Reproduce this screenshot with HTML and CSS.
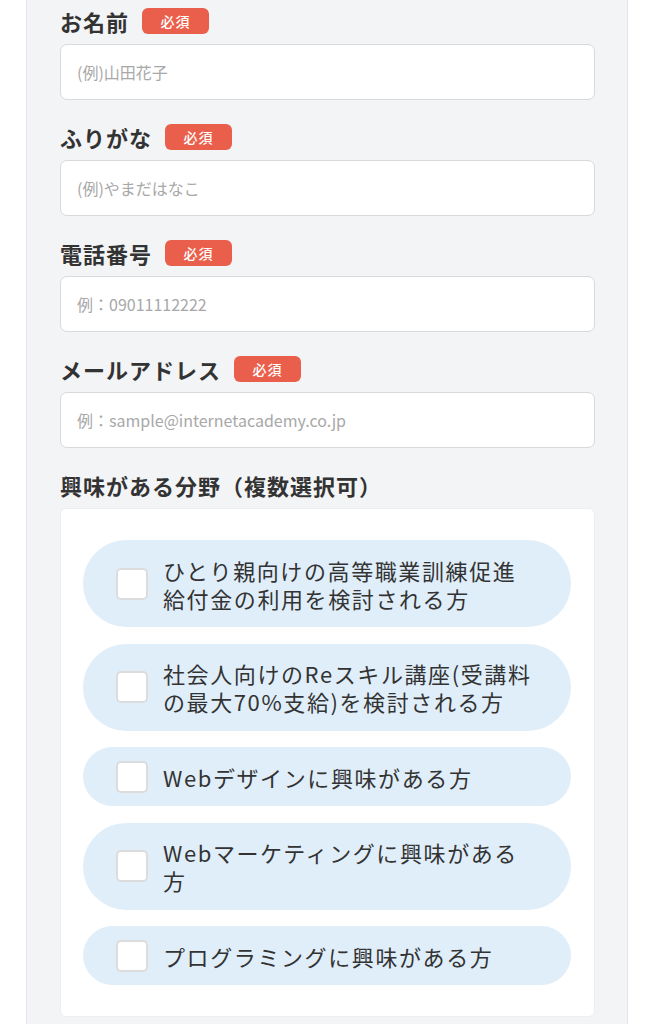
FILE: index.html
```html
<!DOCTYPE html>
<html lang="ja">
<head>
<meta charset="utf-8">
<title>お問い合わせフォーム</title>
<link rel="stylesheet" href="styles.css">
</head>
<body>
<div class="page">
  <form class="panel">
    <div class="field">
      <div class="label-row"><span class="label">お名前</span><span class="badge">必須</span></div>
      <input class="text-input" type="text" placeholder="(例)山田花子">
    </div>
    <div class="field">
      <div class="label-row"><span class="label">ふりがな</span><span class="badge">必須</span></div>
      <input class="text-input" type="text" placeholder="(例)やまだはなこ">
    </div>
    <div class="field">
      <div class="label-row"><span class="label">電話番号</span><span class="badge">必須</span></div>
      <input class="text-input" type="tel" placeholder="例：09011112222">
    </div>
    <div class="field">
      <div class="label-row"><span class="label">メールアドレス</span><span class="badge">必須</span></div>
      <input class="text-input" type="email" placeholder="例：sample@internetacademy.co.jp">
    </div>
    <div class="field">
      <div class="label-row"><span class="label">興味がある分野（複数選択可）</span></div>
      <div class="choices">
        <label class="choice"><input class="check" type="checkbox"><span class="choice-text">ひとり親向けの高等職業訓練促進給付金の利用を検討される方</span></label>
        <label class="choice"><input class="check" type="checkbox"><span class="choice-text">社会人向けのReスキル講座(受講料の最大70%支給)を検討される方</span></label>
        <label class="choice"><input class="check" type="checkbox"><span class="choice-text">Webデザインに興味がある方</span></label>
        <label class="choice"><input class="check" type="checkbox"><span class="choice-text">Webマーケティングに興味がある方</span></label>
        <label class="choice"><input class="check" type="checkbox"><span class="choice-text">プログラミングに興味がある方</span></label>
      </div>
    </div>
  </form>
</div>
</body>
</html>
```

FILE: styles.css
```css
* {
  box-sizing: border-box;
}

html, body {
  margin: 0;
  padding: 0;
  background: #ffffff;
}

body {
  font-family: "Noto Sans CJK JP", "Noto Sans", sans-serif;
  color: #333333;
}

.page {
  padding: 0 27px 0 26px;
}

.panel {
  background: #f3f4f6;
  border-left: 1px solid #e2e4e7;
  border-right: 1px solid #e2e4e7;
  padding: 5px 32px 20px 33px;
  min-height: 1024px;
  margin: 0;
}

.field {
  margin-bottom: 21px;
}

.label-row {
  display: flex;
  align-items: center;
  gap: 13px;
  height: 32px;
  margin-bottom: 7px;
}

.label {
  font-size: 22px;
  font-weight: 700;
  letter-spacing: 1px;
  line-height: 32px;
  color: #333333;
}

.badge {
  display: inline-flex;
  align-items: center;
  justify-content: center;
  width: 67px;
  height: 26px;
  border-radius: 6px;
  background: #ea5f4b;
  color: #ffffff;
  font-size: 14px;
  font-weight: 500;
  letter-spacing: 1px;
}

.text-input {
  display: block;
  width: 100%;
  height: 56px;
  margin: 0;
  padding: 0 16px;
  border: 1px solid #d7d9dc;
  border-radius: 7px;
  background: #ffffff;
  font-family: inherit;
  font-size: 16px;
  color: #333333;
  outline: none;
}

.text-input::placeholder {
  color: #a8a8a8;
}

.choices {
  background: #ffffff;
  border: 1px solid #eceef0;
  border-radius: 6px;
  padding: 31px 23px 31px 22px;
  display: flex;
  flex-direction: column;
  gap: 16.5px;
}

.choice {
  display: flex;
  align-items: center;
  gap: 15px;
  padding: 13.5px 34px 13.5px 33px;
  background: #e0eefa;
  border-radius: 44px;
  cursor: pointer;
}

.check {
  appearance: none;
  -webkit-appearance: none;
  flex: 0 0 auto;
  width: 32px;
  height: 32px;
  margin: 0;
  background: #ffffff;
  border: 2px solid #dcdcdc;
  border-radius: 5px;
}

.choice-text {
  flex: 1 1 auto;
  padding: 2px 0;
  font-size: 22px;
  line-height: 28px;
  letter-spacing: 1.6px;
  color: #333333;
}
```
